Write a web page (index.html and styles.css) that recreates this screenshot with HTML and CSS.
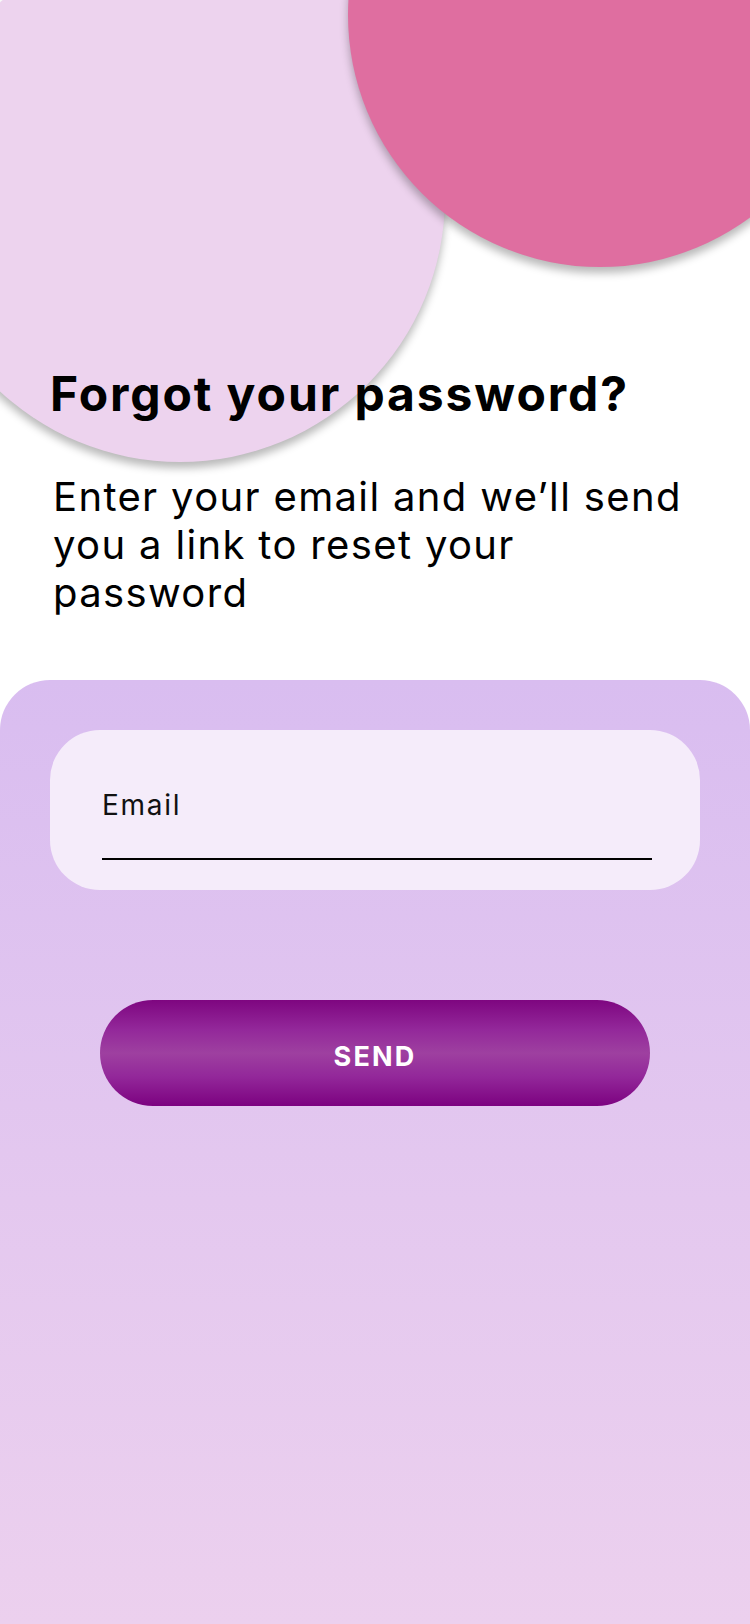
FILE: index.html
```html
<!DOCTYPE html>
<html lang="en">
<head>
<meta charset="utf-8">
<meta name="viewport" content="width=750">
<title>Forgot your password?</title>
<link rel="stylesheet" href="styles.css">
</head>
<body>
<div class="page">
  <header class="hero">
    <div class="blob blob-light"></div>
    <div class="blob blob-pink"></div>
    <h1 class="title">Forgot your password?</h1>
    <p class="subtitle">Enter your email and we’ll send you a link to reset your password</p>
  </header>
  <main class="card">
    <label class="field">
      <span class="field-label">Email</span>
      <span class="field-line"></span>
    </label>
    <button class="btn" type="button">SEND</button>
  </main>
</div>
</body>
</html>
```

FILE: styles.css
```css
* { box-sizing: border-box; }

html, body {
  margin: 0;
  padding: 0;
  background: #ffffff;
}

body {
  font-family: Inter, "Noto Sans", "Liberation Sans", sans-serif;
  color: #000000;
}

.page {
  min-height: 100vh;
  display: flex;
  flex-direction: column;
  overflow: hidden;
}

.hero {
  position: relative;
  height: 680px;
  padding-top: 365px;
}

.blob {
  position: absolute;
  border-radius: 50%;
  box-shadow: 0 6px 8px rgba(0, 0, 0, 0.28);
}

.blob-light {
  left: -85px;
  top: -68px;
  width: 530px;
  height: 530px;
  background: #edd3ee;
}

.blob-pink {
  left: 348px;
  top: -237px;
  width: 504px;
  height: 504px;
  background: #df6ea0;
}

.title {
  position: relative;
  margin: 0 0 0 50px;
  font-size: 48px;
  line-height: 58px;
  font-weight: 700;
  letter-spacing: 1.9px;
}

.subtitle {
  position: relative;
  margin: 50px 0 0 53px;
  max-width: 645px;
  font-size: 40px;
  line-height: 48px;
  font-weight: 400;
  letter-spacing: 1.35px;
}

.card {
  flex: 1;
  display: flex;
  flex-direction: column;
  padding: 50px;
  border-radius: 50px 50px 0 0;
  background: linear-gradient(to bottom, #d9bdf0 0%, #e4c8ef 55%, #ecd0ee 100%);
}

.field {
  display: flex;
  flex-direction: column;
  height: 160px;
  padding: 58px 48px 0 52px;
  border-radius: 50px;
  background: #f5ecfa;
}

.field-label {
  font-size: 28px;
  line-height: 34px;
  font-weight: 400;
  letter-spacing: 1.7px;
  color: #111111;
}

.field-line {
  display: block;
  margin-top: 36px;
  height: 2px;
  background: #000000;
}

.btn {
  margin: 110px 50px 0;
  height: 106px;
  padding: 6px 0 0;
  border: 0;
  border-radius: 53px;
  background: linear-gradient(to bottom, #7e0680 0%, #93289a 28%, #9e40a0 50%, #93289a 72%, #7c0280 100%);
  color: #ffffff;
  font-family: Inter, "Noto Sans", "Liberation Sans", sans-serif;
  font-size: 27px;
  font-weight: 700;
  letter-spacing: 2.2px;
}
```
